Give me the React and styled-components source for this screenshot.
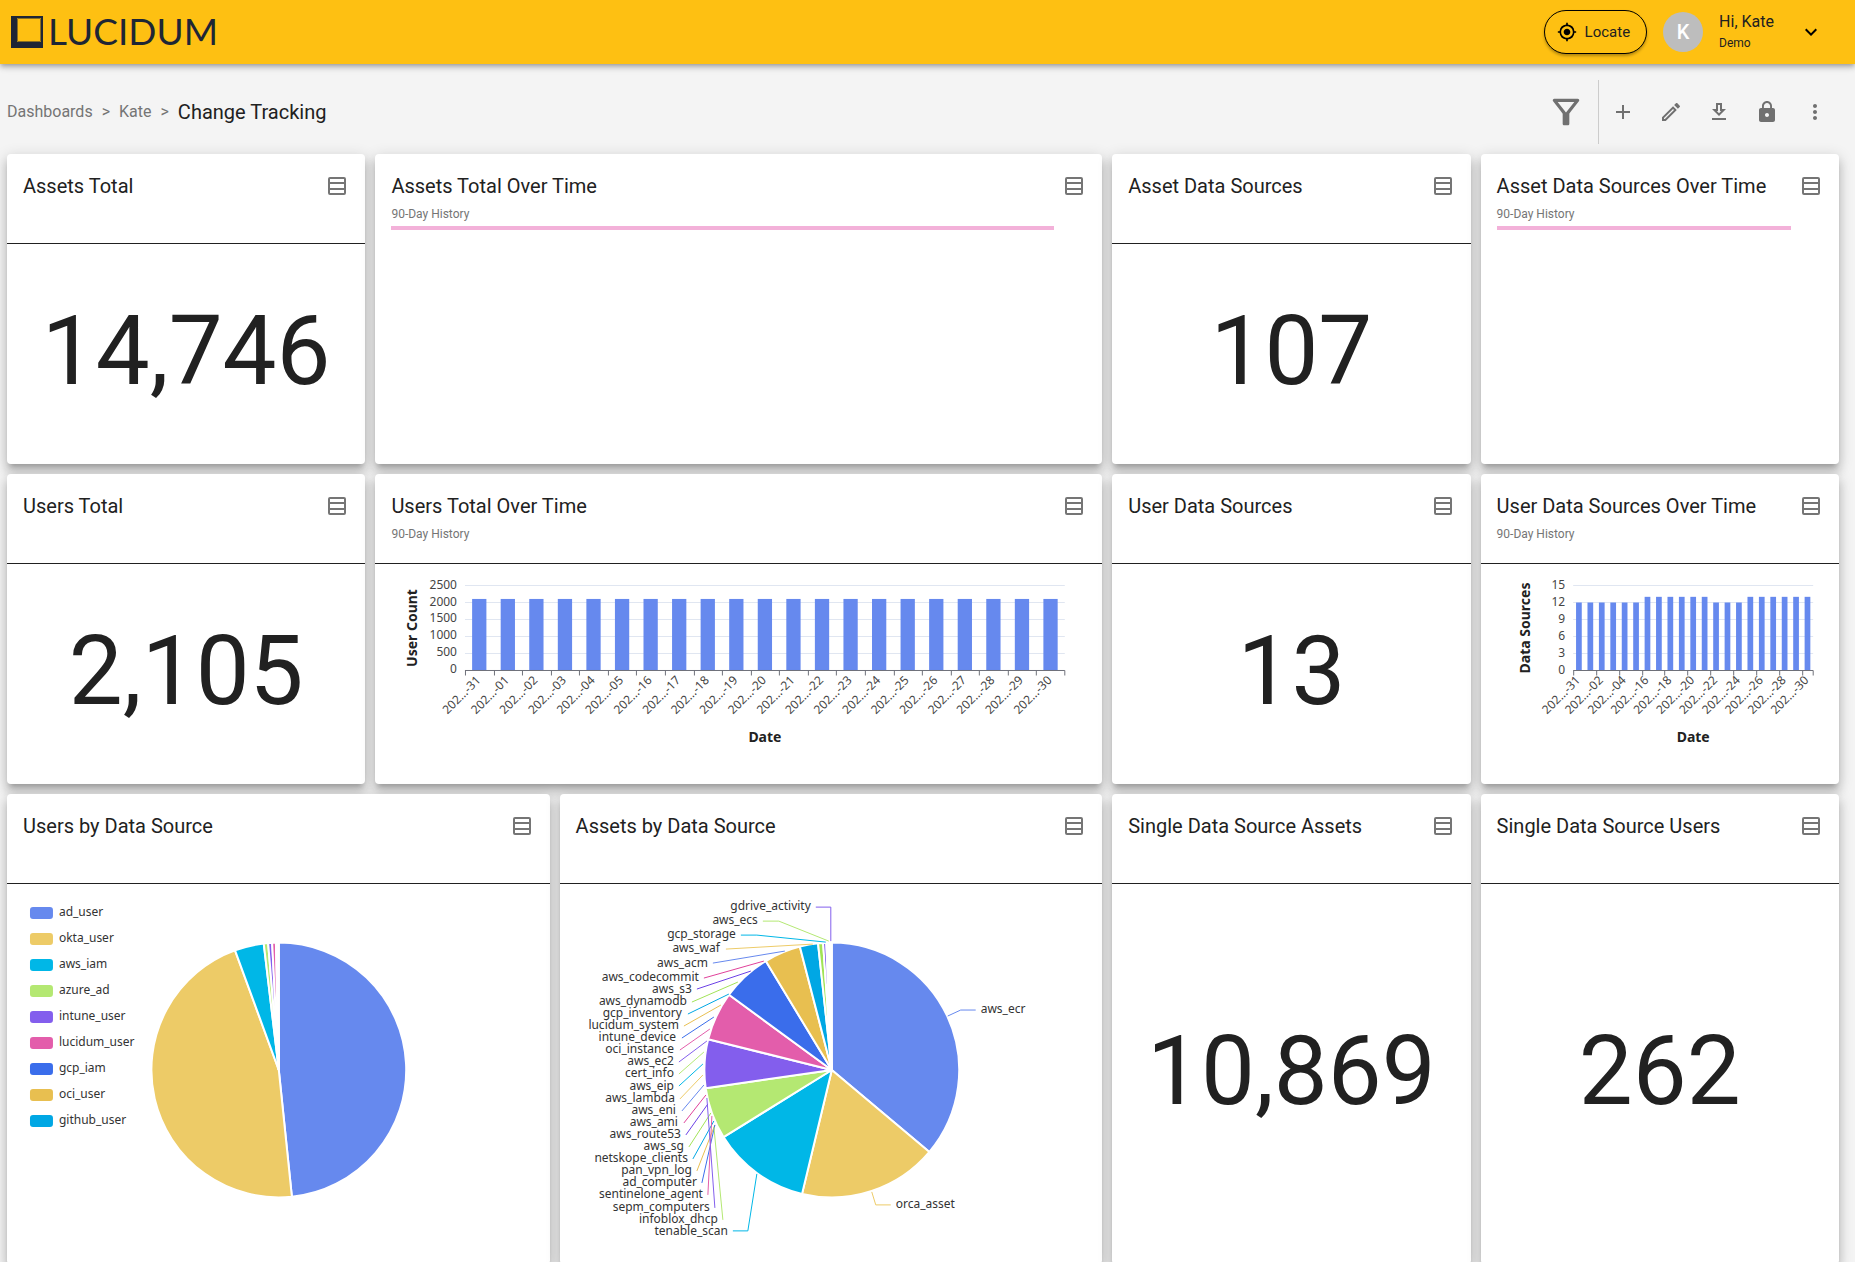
import styled, { createGlobalStyle } from 'styled-components';
import {
  MdMyLocation,
  MdKeyboardArrowDown,
  MdOutlineFilterAlt,
  MdAdd,
  MdLock,
  MdMoreVert,
  MdOutlineEdit,
} from 'react-icons/md';


const GlobalStyle = createGlobalStyle`
    * {
        box-sizing: border-box;
    }
    body {
        margin: 0;
        background: #f4f4f4;
        color: #212121;
        font-family: Roboto, "Helvetica", "Arial", sans-serif;
    }
`;
const Page = styled.div`
    display: flex;
    flex-direction: column;
    height: 100vh;
`;
const Header = styled.header`
    display: flex;
    align-items: center;
    flex-shrink: 0;
    height: 64px;
    padding: 0 32px 0 11px;
    background: #fec012;
    z-index: 1;
    box-shadow: 0 2px 4px -1px rgba(0, 0, 0, 0.2), 0 4px 5px rgba(0, 0, 0, 0.14), 0 1px 10px rgba(0, 0, 0, 0.12);
`;
const Logo = styled.a`
    display: flex;
    align-items: center;
    gap: 5px;
    color: #1e2635;
    text-decoration: none;
`;
const LogoText = styled.span`
    padding-bottom: 2px;
    font-family: Lato, sans-serif;
    font-size: 37px;
    line-height: 40px;
`;
const LocateButton = styled.button`
    display: flex;
    align-items: center;
    gap: 8px;
    height: 44px;
    margin-left: auto;
    padding: 0 16px 0 12px;
    border: 1px solid #000000;
    border-radius: 22px;
    background: #fec012;
    color: #212121;
    font-family: inherit;
    font-size: 15px;
    box-shadow: 0 2px 3px rgba(0, 0, 0, 0.3);
    svg {
        color: #000000;
    }
`;
const Avatar = styled.div`
    display: flex;
    align-items: center;
    justify-content: center;
    width: 40px;
    height: 40px;
    margin: 0 16px;
    border-radius: 50%;
    background: #bdbdbd;
    color: #ffffff;
    font-size: 20px;
    font-weight: 500;
`;
const UserMenu = styled.button`
    display: flex;
    align-items: center;
    gap: 25px;
    padding: 0;
    border: none;
    background: none;
    color: #212121;
    font-family: inherit;
    text-align: left;
    svg {
        color: #000000;
    }
`;
const UserLabel = styled.span`
    padding-bottom: 2px;
`;
const UserName = styled.span`
    display: block;
    font-size: 16px;
    line-height: 24px;
`;
const UserRole = styled.span`
    display: block;
    font-size: 12px;
    line-height: 18px;
`;
const Content = styled.main`
    flex: 1;
    min-height: 0;
    padding: 0 16px 0 7px;
    overflow-y: auto;
    scrollbar-width: none;
`;
const Toolbar = styled.div`
    display: flex;
    align-items: center;
    height: 64px;
    margin: 16px 0 10px;
`;
const Breadcrumb = styled.nav`
    display: flex;
    align-items: center;
    gap: 9px;
    flex: 1;
    color: #757575;
    font-size: 16px;
    line-height: 32px;
`;
const Crumb = styled.a`
    color: inherit;
    text-decoration: none;
`;
const PageTitle = styled.h1`
    margin: 0;
    color: #212121;
    font-size: 20px;
    font-weight: 400;
`;
const IconButton = styled.button`
    display: flex;
    align-items: center;
    justify-content: center;
    width: ${(props) => props.$width || 48}px;
    height: 48px;
    padding: 0;
    border: none;
    background: none;
    color: #707070;
`;
const Divider = styled.div`
    width: 1px;
    height: 64px;
    background: #cccccc;
`;
const Grid = styled.div`
    display: grid;
    grid-template-columns: repeat(10, 1fr);
    grid-template-rows: 310px 310px 470px;
    gap: 10px;
`;
const Card = styled.section`
    display: flex;
    flex-direction: column;
    grid-column: span ${(props) => props.$span};
    min-width: 0;
    border-radius: 4px;
    background: #ffffff;
    box-shadow: 0 5px 5px -3px rgba(0, 0, 0, 0.2), 0 8px 10px 1px rgba(0, 0, 0, 0.14), 0 3px 14px 2px rgba(0, 0, 0, 0.12);
`;
const CardHeader = styled.div`
    display: flex;
    align-items: flex-start;
    gap: 8px;
    height: 90px;
    padding: 16px 16px 0;
    border-bottom: 1px solid ${(props) => (props.$loading ? 'transparent' : '#212121')};
`;
const CardHeading = styled.div`
    flex: 1;
    min-width: 0;
`;
const CardTitle = styled.h2`
    margin: 0;
    font-size: 20px;
    line-height: 32px;
    font-weight: 400;
    white-space: nowrap;
`;
const CardSubtitle = styled.div`
    padding: 2px 0;
    color: #757575;
    font-size: 12px;
    line-height: 20px;
`;
const Loader = styled.div`
    height: 4px;
    background: #f3b1d9;
`;
const TableButton = styled.button`
    display: flex;
    width: 24px;
    height: 32px;
    padding: 4px 0;
    border: none;
    background: none;
    color: #757575;
`;
const CardBody = styled.div`
    display: flex;
    justify-content: center;
    align-items: ${(props) => (props.$center ? 'center' : 'flex-start')};
    flex: 1;
    min-height: 0;
    padding-bottom: ${(props) => (props.$center ? 6 : 8)}px;
`;
const BigNumber = styled.div`
    font-size: 96px;
    line-height: 96px;
`;
const Chart = styled.svg`
    display: block;
    width: 100%;
    height: 100%;
    font-family: "Noto Sans", "Open Sans", sans-serif;
    font-size: 12px;
`;
const AxisLabel = styled.text`
    fill: #444444;
    text-anchor: end;
`;
const AxisName = styled.text`
    fill: #212121;
    font-size: 14px;
    font-weight: 700;
    text-anchor: middle;
`;
const PieLabel = styled.text`
    fill: #333333;
`;


const days = [
  '31', '01', '02', '03', '04', '05', '16', '17', '18', '19', '20',
  '21', '22', '23', '24', '25', '26', '27', '28', '29', '30',
];
const userCounts = days.map(() => 2105);
const userSources = [12, 12, 12, 12, 12, 12, 13, 13, 13, 13, 13, 13, 12, 12, 12, 13, 13, 13, 13, 13, 13];

// end is the angle in degrees, clockwise from the top
const usersBySource = [
  { name: 'ad_user', color: '#6689ee', end: 174.1 },
  { name: 'okta_user', color: '#edcb67', end: 339.9 },
  { name: 'aws_iam', color: '#00b7e7', end: 353.2 },
  { name: 'azure_ad', color: '#b4e872', end: 355.2 },
  { name: 'intune_user', color: '#835eed', end: 357 },
  { name: 'lucidum_user', color: '#e35dab', end: 358.7 },
  { name: 'gcp_iam', color: '#3a6deb', end: 359.2 },
  { name: 'oci_user', color: '#e8bf50', end: 359.6 },
  { name: 'github_user', color: '#00a7e4', end: 360 },
];
const assetsBySource = [
  { color: '#6689ee', end: 130 },
  { color: '#edcb67', end: 193.5 },
  { color: '#00b7e7', end: 238.2 },
  { color: '#b4e872', end: 261.8 },
  { color: '#835eed', end: 284 },
  { color: '#e35dab', end: 306.2 },
  { color: '#3a6deb', end: 328.8 },
  { color: '#e8bf50', end: 345.5 },
  { color: '#00a7e4', end: 353.8 },
  { color: '#a2e356', end: 356.1 },
  { color: '#6a40e6', end: 357.5 },
  { color: '#ffffff', end: 360 },
];
const assetLabels = [
  { name: 'gdrive_activity', x: 251, y: 26, color: '#835eed', line: '256,23 271,23 271,57' },
  { name: 'aws_ecs', x: 198, y: 40, color: '#b4e872', line: '203,37 219,37 269,57' },
  { name: 'gcp_storage', x: 176, y: 54, color: '#00b7e7', line: '181,51 197,51 266,58' },
  { name: 'aws_waf', x: 160, y: 68, color: '#edcb67', line: '166,65 253,60' },
  { name: 'aws_acm', x: 148, y: 83, color: '#6689ee', line: '153,79 225,67' },
  { name: 'aws_codecommit', x: 139, y: 97, color: '#e0409a', line: '144,94 204,77' },
  { name: 'aws_s3', x: 132, y: 109, color: '#6a40e6', line: '137,105 191,87' },
  { name: 'aws_dynamodb', x: 127, y: 121, color: '#a2e356', line: '132,118 178,98' },
  { name: 'gcp_inventory', x: 122, y: 133, color: '#00a7e4', line: '128,130 169,110' },
  { name: 'lucidum_system', x: 119, y: 145, color: '#e8bf50', line: '124,142 161,121' },
  { name: 'intune_device', x: 116, y: 157, color: '#3a6deb', line: '122,154 154,133' },
  { name: 'oci_instance', x: 114, y: 169, color: '#e35dab', line: '120,166 150,145' },
  { name: 'aws_ec2', x: 114, y: 181, color: '#835eed', line: '119,178 147,157' },
  { name: 'cert_info', x: 114, y: 193, color: '#b4e872', line: '119,190 144,168' },
  { name: 'aws_eip', x: 114, y: 206, color: '#00b7e7', line: '119,202 143,180' },
  { name: 'aws_lambda', x: 115, y: 218, color: '#edcb67', line: '120,215 143,191' },
  { name: 'aws_eni', x: 116, y: 230, color: '#6689ee', line: '122,227 144,201' },
  { name: 'aws_ami', x: 118, y: 242, color: '#e0409a', line: '124,239 146,211' },
  { name: 'aws_route53', x: 121, y: 254, color: '#6a40e6', line: '126,251 148,220' },
  { name: 'aws_sg', x: 124, y: 266, color: '#a2e356', line: '129,263 151,229' },
  { name: 'netskope_clients', x: 128, y: 278, color: '#00a7e4', line: '133,275 154,237' },
  { name: 'pan_vpn_log', x: 132, y: 290, color: '#e8bf50', line: '137,287 155,241' },
  { name: 'ad_computer', x: 137, y: 302, color: '#3a6deb', line: '142,299 155,241' },
  { name: 'sentinelone_agent', x: 143, y: 314, color: '#e35dab', line: '148,311 152,232' },
  { name: 'sepm_computers', x: 150, y: 327, color: '#835eed', line: '155,324 147,214' },
  { name: 'infoblox_dhcp', x: 158, y: 339, color: '#b4e872', line: '163,336 154,243' },
  { name: 'tenable_scan', x: 168, y: 351, color: '#00b7e7', line: '173,347 188,347 197,290' },
  { name: 'aws_ecr', x: 421, y: 129, color: '#6689ee', line: '388,132 401,126 416,126', right: true },
  { name: 'orca_asset', x: 336, y: 324, color: '#edcb67', line: '312,308 316,321 331,321', right: true },
];


const LogoMark = () => (
  <svg width="32" height="32" viewBox="0 0 32 32" aria-hidden="true">
    <path fill="#1e2635" fillRule="evenodd" d="M0 0h32v32H0zM6 2v24h24V2z" />
    <path fill="none" stroke="#8a7020" d="M6.5 2.5h23v23h-23z" />
  </svg>
);

const TableIcon = () => (
  <svg width="24" height="24" viewBox="0 0 24 24" fill="none" stroke="currentColor" strokeWidth="2" aria-hidden="true">
    <rect x="4" y="4" width="16" height="16" rx="1" />
    <path d="M4 9h16M4 15h16" />
  </svg>
);

const DownloadIcon = () => (
  <svg width="24" height="24" viewBox="0 0 24 24" fill="currentColor" aria-hidden="true">
    <path d="M13 5v6h1.17L12 13.17 9.83 11H11V5h2m2-2H9v6H5l7 7 7-7h-4V3zm4 15H5v2h14v-2z" />
  </svg>
);

const BarChart = ({ width, left, right, values, max, step, nameX, name, labelEvery }) => {
  const bottom = 106.5;
  const height = 85;
  const band = (right - left) / values.length;
  const ticks = [];
  for (let value = 0; value <= max; value += step) {
    ticks.push(value);
  }

  return (
    <Chart viewBox={`0 0 ${width} 212`} role="img" aria-label={`${name} by date`}>
      {ticks.map((value) => {
        const y = bottom - (value / max) * height;
        return (
          <g key={value}>
            {value > 0 && <path d={`M${left} ${y}H${right}`} stroke="#e0e6f1" />}
            <AxisLabel x={left - 8} y={y + 3}>{value}</AxisLabel>
          </g>
        );
      })}
      {values.map((value, index) => {
        const barHeight = (value / max) * height;
        return (
          <rect
            key={days[index]}
            x={left + band * (index + 0.25)}
            y={bottom - barHeight}
            width={band / 2}
            height={barHeight}
            fill="#6689ee"
          />
        );
      })}
      <path d={`M${left} ${bottom}H${right}M${right} ${bottom}v5`} stroke="#6e7079" />
      {days.map((day, index) => {
        if (index % labelEvery !== 0) {
          return null;
        }
        const x = left + band * (index + 0.5);
        return (
          <g key={day}>
            <path d={`M${Math.round(left + band * index) + 0.5} ${bottom}v5`} stroke="#6e7079" />
            <AxisLabel transform={`translate(${x + 2} 117) rotate(-45)`}>202...-{day}</AxisLabel>
          </g>
        );
      })}
      <AxisName x={(left + right) / 2} y="178">Date</AxisName>
      <AxisName transform={`translate(${nameX} 64) rotate(-90)`}>{name}</AxisName>
    </Chart>
  );
};

const PieSlices = ({ slices }) => {
  const cx = 272;
  const cy = 186;
  const radius = 127.5;
  const point = (angle) => {
    const rad = (angle * Math.PI) / 180;
    return `${cx + radius * Math.sin(rad)} ${cy - radius * Math.cos(rad)}`;
  };

  return slices.map(({ color, end }, index) => {
    const start = index === 0 ? 0 : slices[index - 1].end;
    return (
      <path
        key={end}
        d={`M${cx} ${cy}L${point(start)}A${radius} ${radius} 0 ${end - start > 180 ? 1 : 0} 1 ${point(end)}Z`}
        fill={color}
        stroke="#ffffff"
        strokeWidth="2"
        strokeLinejoin="bevel"
      />
    );
  });
};

const UsersPie = () => (
  <Chart viewBox="0 0 543 372" role="img" aria-label="Users by data source">
    <PieSlices slices={usersBySource} />
    {usersBySource.map(({ name, color }, index) => (
      <g key={name}>
        <rect x="23" y={23 + index * 26} width="23" height="12" rx="3" fill={color} />
        <PieLabel x="52" y={32 + index * 26}>{name}</PieLabel>
      </g>
    ))}
  </Chart>
);

const AssetsPie = () => (
  <Chart viewBox="0 0 543 372" role="img" aria-label="Assets by data source">
    <PieSlices slices={assetsBySource} />
    {assetLabels.map(({ name, x, y, color, line, right }) => (
      <g key={name}>
        <polyline points={line} fill="none" stroke={color} />
        <PieLabel x={x} y={y} textAnchor={right ? 'start' : 'end'}>{name}</PieLabel>
      </g>
    ))}
  </Chart>
);

const Widget = ({ title, subtitle, span, loading, value, children }) => (
  <Card $span={span}>
    <CardHeader $loading={loading}>
      <CardHeading>
        <CardTitle>{title}</CardTitle>
        {subtitle && <CardSubtitle>{subtitle}</CardSubtitle>}
        {loading && <Loader />}
      </CardHeading>
      <TableButton aria-label={`Show ${title} as table`}><TableIcon /></TableButton>
    </CardHeader>
    <CardBody $center={!!value}>
      {value && <BigNumber>{value}</BigNumber>}
      {children}
    </CardBody>
  </Card>
);


const App = () => {
  return (
    <Page>
      <GlobalStyle />
      <Header>
        <Logo href="#">
          <LogoMark />
          <LogoText>LUCIDUM</LogoText>
        </Logo>
        <LocateButton><MdMyLocation size={20} />Locate</LocateButton>
        <Avatar>K</Avatar>
        <UserMenu>
          <UserLabel>
            <UserName>Hi, Kate</UserName>
            <UserRole>Demo</UserRole>
          </UserLabel>
          <MdKeyboardArrowDown size={24} />
        </UserMenu>
      </Header>
      <Content>
        <Toolbar>
          <Breadcrumb>
            <Crumb href="#">Dashboards</Crumb>
            <span>&gt;</span>
            <Crumb href="#">Kate</Crumb>
            <span>&gt;</span>
            <PageTitle>Change Tracking</PageTitle>
          </Breadcrumb>
          <IconButton $width={64} aria-label="Filter"><MdOutlineFilterAlt size={40} /></IconButton>
          <Divider />
          <IconButton aria-label="Add"><MdAdd size={24} /></IconButton>
          <IconButton aria-label="Edit"><MdOutlineEdit size={24} /></IconButton>
          <IconButton aria-label="Download"><DownloadIcon /></IconButton>
          <IconButton aria-label="Lock"><MdLock size={24} /></IconButton>
          <IconButton aria-label="More"><MdMoreVert size={24} /></IconButton>
        </Toolbar>
        <Grid>
          <Widget title="Assets Total" span={2} value="14,746" />
          <Widget title="Assets Total Over Time" subtitle="90-Day History" span={4} loading />
          <Widget title="Asset Data Sources" span={2} value="107" />
          <Widget title="Asset Data Sources Over Time" subtitle="90-Day History" span={2} loading />

          <Widget title="Users Total" span={2} value="2,105" />
          <Widget title="Users Total Over Time" subtitle="90-Day History" span={4}>
            <BarChart width={727} left={90} right={690} values={userCounts} max={2500} step={500} nameX={42} name="User Count" labelEvery={1} />
          </Widget>
          <Widget title="User Data Sources" span={2} value="13" />
          <Widget title="User Data Sources Over Time" subtitle="90-Day History" span={2}>
            <BarChart width={358} left={92} right={332} values={userSources} max={15} step={3} nameX={49} name="Data Sources" labelEvery={2} />
          </Widget>

          <Widget title="Users by Data Source" span={3}>
            <UsersPie />
          </Widget>
          <Widget title="Assets by Data Source" span={3}>
            <AssetsPie />
          </Widget>
          <Widget title="Single Data Source Assets" span={2} value="10,869" />
          <Widget title="Single Data Source Users" span={2} value="262" />
        </Grid>
      </Content>
    </Page>
  );
};

export default App;
